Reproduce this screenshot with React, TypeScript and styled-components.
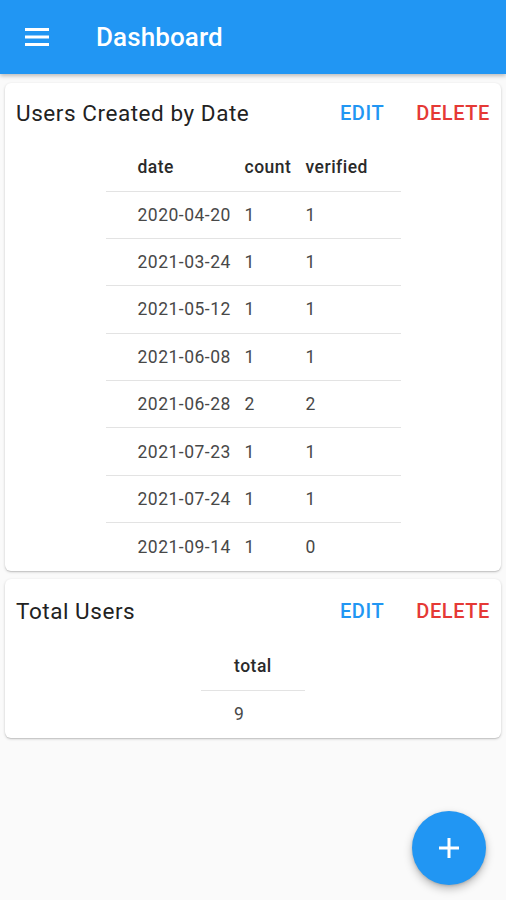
import React from "react";
import styled, { createGlobalStyle } from "styled-components";

const GlobalStyle = createGlobalStyle`
  html, body {
    margin: 0;
    padding: 0;
    background: #fafafa;
    font-family: Roboto, "Noto Sans", sans-serif;
  }
`;

const Page = styled.div`
  min-height: 900px;
  background: #fafafa;
  position: relative;
`;

const AppBar = styled.header`
  height: 74px;
  background: #2196f3;
  display: flex;
  align-items: center;
  padding: 0 0 0 25px;
  box-shadow: 0 2px 4px rgba(0, 0, 0, 0.25);
  color: #fff;
`;

const MenuIcon = styled.svg`
  width: 24px;
  height: 20px;
  margin-right: 47px;
`;

const Title = styled.h1`
  margin: 0;
  font-size: 26px;
  font-weight: 500;
  letter-spacing: 0.1px;
`;

const Content = styled.main`
  display: flex;
  flex-direction: column;
  gap: 8px;
  padding: 9px 5px 0 5px;
`;

const Card = styled.section`
  background: #fff;
  border-radius: 6px;
  padding-bottom: 1px;
  box-shadow: 0 1px 3px rgba(0, 0, 0, 0.18), 0 1px 1px rgba(0, 0, 0, 0.1);
`;

const CardHeader = styled.div<{ $h: number }>`
  display: flex;
  align-items: center;
  height: ${(p) => p.$h}px;
  padding: 0 11px 0 11px;
`;

const CardTitle = styled.h2`
  margin: 0;
  flex: 1;
  font-size: 22.5px;
  font-weight: 400;
  letter-spacing: 0.55px;
  color: #222;
`;

const ActionButton = styled.button<{ $color: string }>`
  border: none;
  background: none;
  font-family: inherit;
  font-size: 20px;
  font-weight: 500;
  letter-spacing: 0.6px;
  color: ${(p) => p.$color};
  padding: 0;
  margin-left: 32px;
`;

const TableWrap = styled.div`
  display: flex;
  justify-content: center;
`;

const Table = styled.table`
  border-collapse: collapse;
  font-size: 17.5px;
  letter-spacing: 0.5px;
`;

const HeadCell = styled.th<{ $pl: number; $w: number }>`
  height: 48px;
  width: ${(p) => p.$w}px;
  box-sizing: border-box;
  padding: 0 0 0 ${(p) => p.$pl}px;
  text-align: left;
  font-weight: 500;
  color: #2a2a2a;
  border-bottom: 1px solid #e3e3e3;
`;

const Cell = styled.td<{ $pl: number; $h: number; $last?: boolean }>`
  height: ${(p) => p.$h}px;
  padding: 0 0 0 ${(p) => p.$pl}px;
  color: #484848;
  border-bottom: ${(p) => (p.$last ? "none" : "1px solid #e3e3e3")};
`;

const Fab = styled.button`
  position: absolute;
  right: 20px;
  bottom: 15px;
  width: 74px;
  height: 74px;
  border-radius: 50%;
  border: none;
  background: #2196f3;
  display: flex;
  align-items: center;
  justify-content: center;
  box-shadow: 0 4px 8px rgba(0, 0, 0, 0.25), 0 1px 3px rgba(0, 0, 0, 0.15);
`;

const rows = [
  ["2020-04-20", "1", "1"],
  ["2021-03-24", "1", "1"],
  ["2021-05-12", "1", "1"],
  ["2021-06-08", "1", "1"],
  ["2021-06-28", "2", "2"],
  ["2021-07-23", "1", "1"],
  ["2021-07-24", "1", "1"],
  ["2021-09-14", "1", "0"],
];

const cols = [
  { name: "date", pl: 32, w: 133 },
  { name: "count", pl: 6, w: 61 },
  { name: "verified", pl: 6, w: 101 },
];

const Actions = () => (
  <>
    <ActionButton $color="#2196f3">EDIT</ActionButton>
    <ActionButton $color="#e53935">DELETE</ActionButton>
  </>
);

const App: React.FC = () => {
  return (
    <Page>
      <GlobalStyle />
      <AppBar>
        <MenuIcon viewBox="0 0 24 20">
          <rect x="0" y="1" width="24" height="3" fill="#fff" />
          <rect x="0" y="8.5" width="24" height="3" fill="#fff" />
          <rect x="0" y="16" width="24" height="3" fill="#fff" />
        </MenuIcon>
        <Title>Dashboard</Title>
      </AppBar>
      <Content>
        <Card>
          <CardHeader $h={60}>
            <CardTitle>Users Created by Date</CardTitle>
            <Actions />
          </CardHeader>
          <TableWrap>
            <Table>
              <thead>
                <tr>
                  {cols.map((c) => (
                    <HeadCell key={c.name} $pl={c.pl} $w={c.w}>
                      {c.name}
                    </HeadCell>
                  ))}
                </tr>
              </thead>
              <tbody>
                {rows.map((r, i) => (
                  <tr key={r[0]}>
                    {r.map((v, j) => (
                      <Cell
                        key={j}
                        $pl={cols[j].pl}
                        $h={i === rows.length - 1 ? 47 : 46.4}
                        $last={i === rows.length - 1}
                      >
                        {v}
                      </Cell>
                    ))}
                  </tr>
                ))}
              </tbody>
            </Table>
          </TableWrap>
        </Card>
        <Card>
          <CardHeader $h={63}>
            <CardTitle>Total Users</CardTitle>
            <Actions />
          </CardHeader>
          <TableWrap>
            <Table>
              <thead>
                <tr>
                  <HeadCell $pl={33} $w={104}>total</HeadCell>
                </tr>
              </thead>
              <tbody>
                <tr>
                  <Cell $pl={33} $h={46} $last>9</Cell>
                </tr>
              </tbody>
            </Table>
          </TableWrap>
        </Card>
      </Content>
      <Fab aria-label="add">
        <svg width="22" height="22" viewBox="0 0 22 22">
          <rect x="9.5" y="1" width="3" height="20" fill="#fff" />
          <rect x="1" y="9.5" width="20" height="3" fill="#fff" />
        </svg>
      </Fab>
    </Page>
  );
};

export default App;
